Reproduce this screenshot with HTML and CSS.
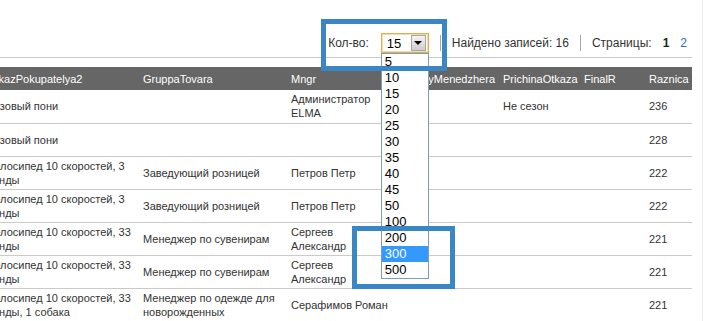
FILE: index.html
```html
<!DOCTYPE html>
<html lang="ru">
<head>
  <meta charset="UTF-8" />
  <title>Отчёт</title>
  <link rel="stylesheet" href="styles.css">
</head>
<body>
  <div class="page">
    <div class="content">

      <!-- панель над таблицей -->
      <div class="toolbar">
        <span class="label">Кол-во:</span>
        <div class="select-wrap">
          <div class="select">
            <span class="select-value">15</span>
            <span class="select-btn"><span class="tri"></span></span>
          </div>
          <ul class="options">
            <li>5</li>
            <li>10</li>
            <li>15</li>
            <li>20</li>
            <li>25</li>
            <li>30</li>
            <li>35</li>
            <li>40</li>
            <li>45</li>
            <li>50</li>
            <li>100</li>
            <li>200</li>
            <li class="hover">300</li>
            <li>500</li>
          </ul>
        </div>
        <span class="sep"></span>
        <span class="label">Найдено записей: 16</span>
        <span class="sep"></span>
        <span class="label">Страницы:</span>
        <span class="page-cur">1</span>
        <a class="page-link" href="#">2</a>
      </div>

      <div class="grid">
        <table>
          <colgroup>
            <col class="c1"><col class="c2"><col class="c3"><col class="c4"><col class="c5"><col class="c6"><col class="c7">
          </colgroup>
          <thead>
            <tr>
              <th>OtkazPokupatelya2</th>
              <th>GruppaTovara</th>
              <th>Mngr</th>
              <th>RabotyMenedzhera</th>
              <th>PrichinaOtkaza</th>
              <th>FinalR</th>
              <th>Raznica</th>
            </tr>
          </thead>
          <tbody>
            <tr>
              <td>Розовый пони</td>
              <td></td>
              <td>Администратор ELMA</td>
              <td></td>
              <td>Не сезон</td>
              <td></td>
              <td>236</td>
            </tr>
            <tr>
              <td>Розовый пони</td>
              <td></td>
              <td></td>
              <td></td>
              <td></td>
              <td></td>
              <td>228</td>
            </tr>
            <tr>
              <td>Велосипед 10 скоростей, 3 панды</td>
              <td>Заведующий розницей</td>
              <td>Петров Петр</td>
              <td></td>
              <td></td>
              <td></td>
              <td>222</td>
            </tr>
            <tr>
              <td>Велосипед 10 скоростей, 3 панды</td>
              <td>Заведующий розницей</td>
              <td>Петров Петр</td>
              <td></td>
              <td></td>
              <td></td>
              <td>222</td>
            </tr>
            <tr>
              <td>Велосипед 10 скоростей, 33 панды</td>
              <td>Менеджер по сувенирам</td>
              <td>Сергеев Александр</td>
              <td></td>
              <td></td>
              <td></td>
              <td>221</td>
            </tr>
            <tr>
              <td>Велосипед 10 скоростей, 33 панды</td>
              <td>Менеджер по сувенирам</td>
              <td>Сергеев Александр</td>
              <td></td>
              <td></td>
              <td></td>
              <td>221</td>
            </tr>
            <tr>
              <td>Велосипед 10 скоростей, 33 панды, 1 собака</td>
              <td>Менеджер по одежде для новорожденных</td>
              <td>Серафимов Роман</td>
              <td></td>
              <td></td>
              <td></td>
              <td>221</td>
            </tr>
          </tbody>
        </table>
      </div>
    </div>

    <!-- выделения поверх скриншота -->
    <div class="mark mark-top"></div>
    <div class="mark mark-bottom"></div>
  </div>
</body>
</html>
```

FILE: styles.css
```css
* {
  margin: 0;
  padding: 0;
  box-sizing: border-box;
}

html, body {
  height: 100%;
  overflow: hidden;
  background: #fff;
}

body {
  font-family: "Liberation Sans", Arial, sans-serif;
  font-size: 12px;
  color: #333;
}

.page {
  position: relative;
  width: 703px;
  height: 321px;
  border-right: 1px solid #ececec;
}

.content {
  width: 692px;
}

/* toolbar */

.toolbar {
  height: 58px;
  display: flex;
  align-items: center;
  justify-content: flex-end;
  padding: 29px 5px 0 0;
  border-bottom: 1px solid #c9c9c9;
  margin-bottom: 9px;
}

.label {
  white-space: nowrap;
}

.select-wrap {
  position: relative;
  margin-left: 12px;
}

.select {
  width: 48px;
  height: 20px;
  display: flex;
  align-items: center;
  justify-content: space-between;
  border: 1px solid #dfae55;
  box-shadow: inset 0 0 0 1px #f4dca6;
  background: #fff;
  padding: 0 2px 0 5px;
}

.select-value {
  font-size: 13px;
  color: #000;
}

.select-btn {
  width: 15px;
  height: 16px;
  border: 1px solid #a7a7a7;
  background: linear-gradient(#f4f4f4, #cdcdcd);
  display: flex;
  align-items: center;
  justify-content: center;
}

.tri {
  width: 0;
  height: 0;
  border-left: 4px solid transparent;
  border-right: 4px solid transparent;
  border-top: 4px solid #000;
}

.options {
  position: absolute;
  top: 20px;
  left: 0;
  width: 48px;
  list-style: none;
  background: #fff;
  border: 1px solid #7f9db9;
  z-index: 5;
}

.options li {
  height: 16px;
  line-height: 16px;
  padding-left: 3px;
  font-size: 13px;
  color: #000;
}

.options li.hover {
  background: #3399ff;
  color: #fff;
}

.sep {
  width: 1px;
  height: 16px;
  background: #a8a8a8;
  margin: 0 11px;
}

.page-cur {
  font-weight: bold;
  color: #222;
  margin-left: 11px;
}

.page-link {
  color: #2a6fbf;
  text-decoration: none;
  margin-left: 11px;
}

/* grid */

.grid {
  width: 692px;
  overflow: hidden;
  font-size: 11px;
}

table {
  width: 711px;
  margin-left: -19px;
  table-layout: fixed;
  border-collapse: collapse;
}

col.c1 { width: 156px; }
col.c2 { width: 148px; }
col.c3 { width: 108px; }
col.c4 { width: 104px; }
col.c5 { width: 81px; }
col.c6 { width: 65px; }
col.c7 { width: 49px; }

th {
  height: 23px;
  background: #666;
  color: #fff;
  font-weight: normal;
  text-align: left;
  padding: 0 4px 0 6px;
  white-space: nowrap;
}

td {
  height: 33px;
  padding: 1px 4px 1px 6px;
  line-height: 14px;
  vertical-align: middle;
  border-bottom: 1px solid #cacaca;
}

/* annotation frames */

.mark {
  position: absolute;
  border: 5px solid #3b87c6;
  z-index: 10;
}

.mark-top {
  left: 321px;
  top: 19px;
  width: 126px;
  height: 52px;
}

.mark-bottom {
  left: 352px;
  top: 226px;
  width: 103px;
  height: 63px;
}
```
